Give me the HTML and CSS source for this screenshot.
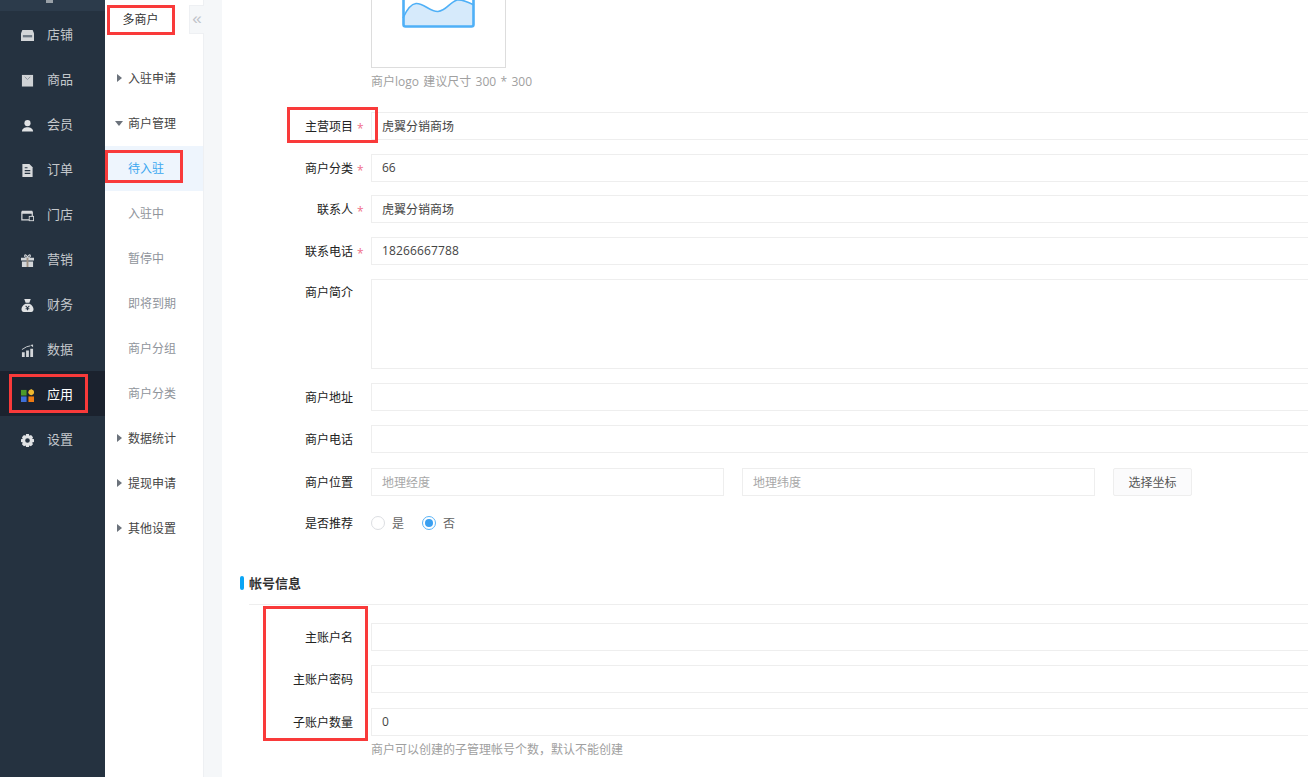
FILE: index.html
```html
<!DOCTYPE html>
<html lang="zh">
<head>
<meta charset="utf-8">
<title>多商户</title>
<link rel="stylesheet" href="styles.css">
</head>
<body>
<div class="app">
  <nav class="rail">
    <div class="rail-top"><span class="rail-top-stub"></span></div>
    <a class="rail-item"><svg viewBox="0 0 14 14"><path fill="#d3d6d9" d="M1.500 1h11L14 4.500V13H0V4.500z"/><path fill="#6f7a86" d="M2 6.500h10v2.500H2z"/></svg><span>店铺</span></a>
    <a class="rail-item"><svg viewBox="0 0 14 14"><path fill="#cfd2d5" d="M1 1h12v12.500H1z"/><path fill="none" stroke="#8b929a" d="M4 3l3 3 3-3"/></svg><span>商品</span></a>
    <a class="rail-item"><svg viewBox="0 0 14 14"><circle cx="7" cy="4.500" r="3.300" fill="#e0e2e4"/><path fill="#e0e2e4" d="M1 13.500c0-3 3-4.500 6-4.500s6 1.500 6 4.500z"/></svg><span>会员</span></a>
    <a class="rail-item"><svg viewBox="0 0 14 14"><path fill="#d8dadc" d="M1.500 0h7.500l3.500 3.500V14h-11z"/><path fill="#253240" d="M4 6.500h6v1.300H4zM4 9.500h6v1.300H4zM4 3.500h3v1.200H4z"/></svg><span>订单</span></a>
    <a class="rail-item"><svg viewBox="0 0 15 14"><path fill="none" stroke="#d8dadc" stroke-width="1.400" d="M1 3h12v9H1z"/><path fill="#d8dadc" d="M1 1.500h12V5H1z"/><rect x="9.500" y="8" width="5" height="5" fill="#253240" stroke="#d8dadc"/></svg><span>门店</span></a>
    <a class="rail-item"><svg viewBox="0 0 14 14"><path fill="#d3d6d9" d="M0 4h14v3H0zM1 8h12v6H1z"/><path fill="none" stroke="#d3d6d9" stroke-width="1.200" d="M7 4C5 4 3.500 3 4 1.500S7 2 7 4c0-2 2.500-4 3-2.500S9 4 7 4z"/><path fill="#9c8f80" d="M6 4h2v10H6z"/></svg><span>营销</span></a>
    <a class="rail-item"><svg viewBox="0 0 14 14"><path fill="#e0e2e4" d="M3.500 0h7L9 4H5zM5 5h4c3 1 4.500 4 4.500 6 0 1.500-1 3-2.500 3H3C1.500 14 .5 12.500.5 11 .5 9 2 6 5 5z"/><path fill="none" stroke="#253240" stroke-width="1.100" d="M5 7.500l2 2 2-2M7 9.500V12M5 10.500h4"/></svg><span>财务</span></a>
    <a class="rail-item"><svg viewBox="0 0 14 14"><path fill="#d3d6d9" d="M1 9h3v5H1zM5.500 7h3v7h-3zM10 5h3v9h-3z"/><path fill="none" stroke="#d3d6d9" d="M1 6l5-3 4-1"/><path fill="#d3d6d9" d="M13 .5v3L10 1z"/></svg><span>数据</span></a>
    <a class="rail-item rail-active"><svg viewBox="0 0 14 14"><path fill="#4c9a2a" d="M0 1h6v6H0z"/><path fill="#3e6fd8" d="M0 8h6v6H0z"/><path fill="#ee7a12" d="M8 8h6v6H8z"/><path fill="#efb92f" d="M11 0l3 3.500L11 7 8 3.500z"/><circle cx="11" cy="3.500" r="3" fill="#efb92f"/></svg><span>应用</span></a>
    <a class="rail-item"><svg viewBox="0 0 14 14"><path fill="#e0e2e4" fill-rule="evenodd" d="M5.500 0h3l.5 2 1.800-.8 2.200 2.200L12 5.200l2 .5v3l-2 .5.900 1.800-2.200 2.200L9 12.300 8.500 14h-3L5 12.300l-1.800.9L1 11l.9-1.800L0 8.700v-3l1.900-.5L1 3.400l2.200-2.200L5 2zM7 4.500a2.500 2.500 0 1 0 0 5 2.500 2.500 0 0 0 0-5z"/></svg><span>设置</span></a>
  </nav>

  <aside class="subnav">
    <div class="subnav-head">
      <div class="subnav-title">多商户</div>
      <div class="collapse">«</div>
    </div>
    <ul class="subnav-list">
      <li class="group"><i class="caret right"></i>入驻申请</li>
      <li class="group"><i class="caret down"></i>商户管理</li>
      <li class="leaf current">待入驻</li>
      <li class="leaf">入驻中</li>
      <li class="leaf">暂停中</li>
      <li class="leaf">即将到期</li>
      <li class="leaf">商户分组</li>
      <li class="leaf">商户分类</li>
      <li class="group"><i class="caret right"></i>数据统计</li>
      <li class="group"><i class="caret right"></i>提现申请</li>
      <li class="group"><i class="caret right"></i>其他设置</li>
    </ul>
  </aside>

  <main class="content">
    <div class="logo-row">
      <div class="logo-box">
        <svg class="logo-img" viewBox="0 0 73 28"><path fill="#d6eafb" d="M1 18C5 9 9 4 14 3.500 22 3 28 12 36 11.500 44 11 48 2 55 0c5-1 11 2 17 5v19a3 3 0 0 1-3 3H4a3 3 0 0 1-3-3z"/><path fill="none" stroke="#4fb0f7" stroke-width="1.600" d="M1 18C5 9 9 4 14 3.500 22 3 28 12 36 11.500 44 11 48 2 55 0c5-1 11 2 17 5"/><path fill="none" stroke="#4fb0f7" stroke-width="2.600" d="M1.500 0v24.500a2 2 0 0 0 2 2h66a2 2 0 0 0 2-2V0"/></svg>
      </div>
      <p class="help wide">商户logo 建议尺寸 300 * 300</p>
    </div>

    <div class="row first"><label class="lbl">主营项目</label><em class="star">*</em><div class="field">虎翼分销商场</div></div>
    <div class="row"><label class="lbl">商户分类</label><em class="star">*</em><div class="field">66</div></div>
    <div class="row"><label class="lbl">联系人</label><em class="star">*</em><div class="field">虎翼分销商场</div></div>
    <div class="row"><label class="lbl">联系电话</label><em class="star">*</em><div class="field num">18266667788</div></div>
    <div class="row tall"><label class="lbl">商户简介</label><em class="star"></em><div class="field"></div></div>
    <div class="row"><label class="lbl">商户地址</label><em class="star"></em><div class="field"></div></div>
    <div class="row"><label class="lbl">商户电话</label><em class="star"></em><div class="field"></div></div>
    <div class="row geo"><label class="lbl">商户位置</label><em class="star"></em>
      <div class="field half ph">地理经度</div>
      <div class="field half ph">地理纬度</div>
      <div class="btn">选择坐标</div>
    </div>
    <div class="row"><label class="lbl">是否推荐</label><em class="star"></em>
      <span class="radio"></span><span class="radio-text">是</span>
      <span class="radio on"></span><span class="radio-text">否</span>
    </div>

    <h3 class="section">帐号信息</h3>

    <div class="row"><label class="lbl">主账户名</label><em class="star"></em><div class="field"></div></div>
    <div class="row"><label class="lbl">主账户密码</label><em class="star"></em><div class="field"></div></div>
    <div class="row last"><label class="lbl">子账户数量</label><em class="star"></em><div class="field">0</div></div>
    <p class="help bottom">商户可以创建的子管理帐号个数，默认不能创建</p>
  </main>
</div>

<div class="mark mark-title"></div>
<div class="mark mark-current"></div>
<div class="mark mark-app"></div>
<div class="mark mark-main"></div>
<div class="mark mark-account"></div>
</body>
</html>
```
FILE: styles.css
```css
* { box-sizing: border-box; }
html, body { margin: 0; height: 100%; overflow: hidden; }
body {
  font-family: "Open Sans", "Noto Sans CJK SC", "Liberation Sans", sans-serif;
  font-size: 12px;
  color: #333;
  background: #f5f7f9;
}
.app { display: flex; height: 777px; overflow: hidden; }

.rail { width: 105px; flex: none; background: #253240; }
.rail-top { height: 11px; background: #2c3b4b; overflow: hidden; padding-left: 46px; }
.rail-top-stub { display: block; width: 7px; height: 3px; background: #9aa1a8; }
.rail-item { display: flex; align-items: center; height: 45px; padding-left: 21px; color: #c4c8cc; font-size: 13px; }
.rail-item span { padding-bottom: 1px; }
.rail-item svg { width: 13px; height: 13px; margin: 3px 13px 0 0; flex: none; }
.rail-active { background: #1b222e; color: #fff; }

.subnav { width: 99px; flex: none; background: #fff; border-right: 1px solid #eef0f3; }
.subnav-head { height: 56px; display: flex; align-items: flex-start; padding-top: 5px; }
.subnav-title { width: 71px; flex: none; height: 29px; line-height: 29px; text-align: center; color: #333; margin-right: 13px; }
.collapse { width: 15px; flex: none; height: 29px; line-height: 25px; text-align: center; color: #bfc3c9; font-size: 17px; font-family: "Liberation Sans", sans-serif; background: #f5f7f9; border: 1px solid #eef0f3; border-right: 0; }
.subnav-list { list-style: none; margin: 0; padding: 0; }
.subnav-list li { height: 45px; line-height: 45px; padding-left: 23px; position: relative; }
.group { color: #444; }
.leaf { color: #8f949b; }
.subnav-list .current { background: #eef5fd; color: #3aa7f0; }
.caret { position: absolute; width: 0; height: 0; border-style: solid; border-color: transparent; }
.caret.right { left: 12px; top: 18px; border-width: 4px 0 4px 5px; border-left-color: #6b727b; }
.caret.down { left: 10px; top: 20px; border-width: 5px 4px 0 4px; border-top-color: #6b727b; }

.content { flex: 1; min-width: 0; margin-left: 18px; background: #fff; }
.logo-row { padding-left: 149px; height: 98px; }
.logo-box { width: 135px; height: 68px; border: 1px solid #ddd; border-top: 0; padding-left: 30px; }
.logo-img { display: block; width: 73px; height: 28px; }
.help { margin: 0; color: #a0a0a0; font-size: 12px; line-height: 28px; }
.logo-row .help { line-height: 27px; }
.help.wide { word-spacing: 1.2px; }
.row { display: flex; align-items: center; height: 28px; margin-bottom: 13.67px; }
.row.first { margin-top: 14px; }
.row.tall { height: 90.67px; align-items: flex-start; }
.row.geo { margin-top: 15px; }
.row.last { margin-top: 15.17px; margin-bottom: 0; }
.row.tall .lbl { line-height: 28px; }
.lbl { width: 131px; flex: none; text-align: right; color: #222; }
.star { width: 18px; flex: none; font-style: normal; color: #f0708a; padding: 6px 0 0 4px; line-height: 1; }
.field { flex: 1; align-self: stretch; min-width: 0; margin-right: -10px; border: 1px solid #eeeeee; padding-left: 10px; display: flex; align-items: center; color: #444; }
.field.num { letter-spacing: .15px; }
.tall .field { align-items: flex-start; }
.field.half { flex: none; width: 353px; margin-right: 18px; }
.ph { color: #a8a8a8; }
.btn { width: 79px; flex: none; align-self: stretch; display: flex; align-items: center; justify-content: center; border: 1px solid #eeeeee; background: #fbfbfc; color: #555; border-radius: 2px; }
.radio { width: 14px; height: 14px; border: 1px solid #dcdee2; border-radius: 50%; margin-right: 7px; position: relative; flex: none; }
.radio.on { border-color: #5bb4f7; }
.radio.on::after { content: ""; position: absolute; inset: 2px; border-radius: 50%; background: #3a9ff0; }
.radio-text { color: #666; margin-right: 18px; }
.section { margin: 35.66px 0 18px 27px; height: 32px; font-size: 13px; line-height: 20px; font-weight: 700; color: #333; border-bottom: 1px solid #eeeeee; position: relative; }
.section::before { content: ""; position: absolute; left: -9px; top: 3px; width: 4px; height: 14px; background: #0aa5f5; border-radius: 2px; }
.help.bottom { padding-left: 149px; }

.mark { position: absolute; border: 3px solid #f93a3a; pointer-events: none; }
.mark-title { left: 107px; top: 5px; width: 68px; height: 30px; }
.mark-current { left: 105px; top: 150px; width: 78px; height: 33px; }
.mark-app { left: 9px; top: 374px; width: 79px; height: 39px; }
.mark-main { left: 287px; top: 107px; width: 91px; height: 36px; }
.mark-account { left: 263px; top: 606px; width: 105px; height: 135px; }
```
